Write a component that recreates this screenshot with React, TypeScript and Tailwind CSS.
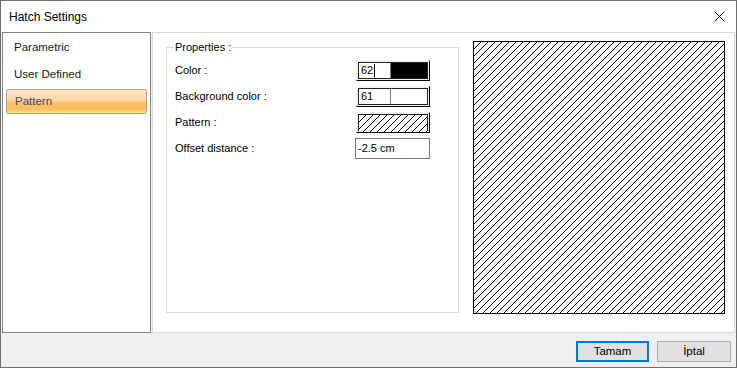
import React from "react";

const font = { fontFamily: '"Liberation Sans", Arial, sans-serif' };

function Hatch({ id, w, h, step = 6 }: { id: string; w: number; h: number; step?: number }) {
  return (
    <svg width={w} height={h} className="block" shapeRendering="crispEdges">
      <defs>
        <pattern id={id} width={step} height={step} patternUnits="userSpaceOnUse">
          <path
            d={`M0,${step} L${step},0 M${-step / 2},${step / 2} L${step / 2},${-step / 2} M${step / 2},${step * 1.5} L${step * 1.5},${step / 2}`}
            stroke="#000"
            strokeWidth="1"
            fill="none"
          />
        </pattern>
      </defs>
      <rect width={w} height={h} fill="#fff" />
      <rect width={w} height={h} fill={`url(#${id})`} />
    </svg>
  );
}

function Raised({ children }: { children: React.ReactNode }) {
  return (
    <div className="w-[74px] h-[21px] border-t border-l border-[#f4f4f4] border-r border-b border-r-black border-b-black bg-[#f0f0f0] p-px">
      <div className="w-full h-full border border-[#202020] flex">{children}</div>
    </div>
  );
}

function ColorField({ value, swatch, caret }: { value: string; swatch: string; caret?: boolean }) {
  return (
    <Raised>
      <div className="w-[32px] h-full bg-white border-r border-[#7a7a7a] flex items-center pl-[2px] text-[11px] text-black leading-none">
        <span>{value}</span>
        {caret && <span className="w-px h-[13px] bg-black ml-[1px]" />}
      </div>
      <div className={`flex-1 h-full ${swatch}`} />
    </Raised>
  );
}

export default function App() {
  return (
    <div style={font} className="w-[737px] h-[368px] border border-[#6e6e6e] bg-[#f0f0f0] flex flex-col relative overflow-hidden">
      <div className="absolute top-[-1px] left-[204px] w-[385px] h-px bg-[#4a1c78]" />
      {/* title bar */}
      <div className="h-[31px] bg-white flex items-center justify-between pl-[8px] pr-[11px] shrink-0">
        <span className="text-[12px] text-black">Hatch Settings</span>
        <svg width="11" height="11" viewBox="0 0 11 11" className="block">
          <path d="M0.5,0.5 L10.5,10.5 M10.5,0.5 L0.5,10.5" stroke="#000" strokeWidth="1" />
        </svg>
      </div>
      {/* content */}
      <div className="flex pl-px pr-px h-[301px] shrink-0">
        <div className="w-[149px] h-full bg-white border border-[#828282] flex flex-col pt-px text-[11.5px] text-[#1a1a1a]">
          <div className="h-[27px] flex items-center pl-[11px]">Parametric</div>
          <div className="h-[27px] flex items-center pl-[11px]">User Defined</div>
          <div className="mt-[1px] ml-[3px] w-[141px] h-[25px] rounded-[2px] border border-[#b9a27a] bg-[linear-gradient(to_bottom,#fee6c8_0%,#fdd7a3_45%,#fbc064_55%,#fbc15e_85%,#ffe394_100%)] flex items-center pl-[8px] pt-px text-[#3f4c6a]">
            Pattern
          </div>
        </div>
        <div className="ml-px w-[583px] h-full bg-white border border-[#dadada] flex items-start pt-[8px] pl-[13px] gap-[14px]">
          <div className="mt-[6px] w-[293px] h-[266px] border border-[#dcdcdc] relative pt-[12px] pl-[8px] flex flex-col gap-[5px] text-[11px] text-black">
            <span className="absolute top-[-8px] left-[7px] bg-white px-px leading-[14px]">Properties :</span>
            <div className="flex items-center h-[21px]">
              <span className="w-[181px]">Color :</span>
              <ColorField value="62" swatch="bg-black" caret />
            </div>
            <div className="flex items-center h-[21px]">
              <span className="w-[181px]">Background color :</span>
              <ColorField value="61" swatch="bg-white" />
            </div>
            <div className="flex items-center h-[21px]">
              <span className="w-[181px]">Pattern :</span>
              <Raised>
                <Hatch id="hsmall" w={70} h={17} step={7} />
              </Raised>
            </div>
            <div className="flex items-center h-[21px]">
              <span className="w-[180px]">Offset distance :</span>
              <div className="w-[75px] h-[21px] border border-[#7a7a7a] bg-white flex items-center pl-[2px]">-2.5 cm</div>
            </div>
          </div>
          <div className="w-[252px] h-[273px] border border-black">
            <Hatch id="hbig" w={250} h={271} step={7} />
          </div>
        </div>
      </div>
      {/* bottom */}
      <div className="flex-1 flex justify-end items-start pt-[8px] pr-[5px] gap-[8px]">
        <button className="w-[73px] h-[21px] bg-[#e1e1e1] border-2 border-[#0078d7] text-[11.5px] text-black flex items-center justify-center">
          Tamam
        </button>
        <button className="w-[74px] h-[21px] bg-[#e1e1e1] border border-[#adadad] text-[11.5px] text-black flex items-center justify-center">
          İptal
        </button>
      </div>
    </div>
  );
}
